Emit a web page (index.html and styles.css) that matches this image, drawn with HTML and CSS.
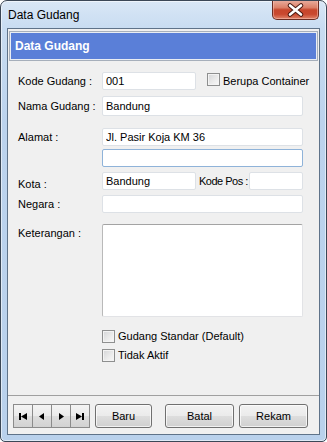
FILE: index.html
```html
<!DOCTYPE html>
<html>
<head>
<meta charset="utf-8">
<link rel="stylesheet" href="styles.css">
</head>
<body>
<div class="window">
  <div class="titlebar">
    <span class="title">Data Gudang</span>
    <div class="close">
      <svg width="47" height="20" viewBox="0 0 47 20">
        <path d="M18 5.5 L29 14.5 M29 5.5 L18 14.5" stroke="#4a1a12" stroke-width="4.6" stroke-linecap="round"/>
        <path d="M18 5.5 L29 14.5 M29 5.5 L18 14.5" stroke="#ffffff" stroke-width="2.6" stroke-linecap="round"/>
      </svg>
    </div>
  </div>
  <div class="client">
    <div class="panel">
      <div class="panel-head">Data Gudang</div>
      <div class="form">
        <div class="row r1">
          <span class="lbl">Kode Gudang :</span>
          <input class="field short" value="001">
          <span class="cb cb-inline"></span><span class="cbtext">Berupa Container</span>
        </div>
        <div class="row r2">
          <span class="lbl">Nama Gudang :</span>
          <input class="field wide tall" value="Bandung">
        </div>
        <div class="row r3">
          <span class="lbl">Alamat :</span>
          <input class="field wide" value="Jl. Pasir Koja KM 36">
        </div>
        <div class="row r4">
          <span class="lbl"></span>
          <input class="field wide focus" value="">
        </div>
        <div class="row r5">
          <span class="lbl low">Kota :</span>
          <input class="field short" value="Bandung">
          <span class="lbl2">Kode Pos :</span>
          <input class="field pos" value="">
        </div>
        <div class="row r6">
          <span class="lbl">Negara :</span>
          <input class="field wide" value="">
        </div>
        <div class="row r7">
          <span class="lbl top">Keterangan :</span>
          <textarea class="memo"></textarea>
        </div>
        <div class="chkrow c1"><span class="cb"></span><span class="cbtext">Gudang Standar (Default)</span></div>
        <div class="chkrow c2"><span class="cb"></span><span class="cbtext">Tidak Aktif</span></div>
      </div>
    </div>
    <div class="sep"></div>
    <div class="footer">
      <div class="nav">
        <div class="nb"><svg width="8" height="7" viewBox="0 0 8 7"><rect x="0" y="0" width="2" height="7" fill="#000"/><polygon points="8,0 2,3.5 8,7" fill="#000"/></svg></div>
        <div class="nb"><svg width="6" height="7" viewBox="0 0 6 7"><polygon points="5,0 0,3.5 5,7" fill="#000"/></svg></div>
        <div class="nb"><svg width="6" height="7" viewBox="0 0 6 7"><polygon points="1,0 6,3.5 1,7" fill="#000"/></svg></div>
        <div class="nb"><svg width="8" height="7" viewBox="0 0 8 7"><polygon points="0,0 6,3.5 0,7" fill="#000"/><rect x="6" y="0" width="2" height="7" fill="#000"/></svg></div>
      </div>
      <button class="btn baru">Baru</button>
      <button class="btn batal">Batal</button>
      <button class="btn rekam">Rekam</button>
    </div>
  </div>
</div>
</body>
</html>
```
FILE: styles.css
```css
html, body {
  margin: 0;
  padding: 0;
  background: #ffffff;
}
* { box-sizing: border-box; }

.window {
  width: 327px;
  height: 442px;
  border: 1px solid #3b4756;
  border-radius: 7px 7px 5px 5px;
  background: linear-gradient(to bottom, #d9e7f6 0px, #c8dcf1 28px, #bcd3ed 120px, #b9d1ec 100%);
  box-shadow: inset 0 0 0 1px rgba(255,255,255,0.55);
  display: flex;
  flex-direction: column;
  font-family: "Liberation Sans", Arial, sans-serif;
  overflow: hidden;
}

.titlebar {
  height: 27px;
  flex: none;
  display: flex;
  align-items: flex-start;
  padding-left: 7px;
}
.title {
  font-size: 12px;
  line-height: 14px;
  padding-top: 7px;
  color: #000;
}
.close {
  margin-left: auto;
  margin-right: 7px;
  margin-top: -1px;
  width: 47px;
  height: 20px;
  border: 1px solid #6b2c22;
  border-top: none;
  border-radius: 0 0 5px 5px;
  background: linear-gradient(to bottom, #eab0a2 0%, #db8068 40%, #c7462c 52%, #c9482f 75%, #e0846a 100%);
  box-shadow: inset 0 0 0 1px rgba(255,210,200,0.45);
  position: relative;
}
.close svg {
  position: absolute;
  left: -1px;
  top: 0;
}

.client {
  margin: 0 6px;
  height: 407px;
  flex: none;
  border: 1px solid #5f7389;
  background: #f0f0f0;
  display: flex;
  flex-direction: column;
}

.panel {
  height: 366px;
  flex: none;
}
.panel-head {
  margin: 3px 2px 0 2px;
  height: 28px;
  border: 1px solid #e9edf3;
  box-shadow: 0 0 0 1px #a6afbb;
  background: #5a7fd8;
  color: #ffffff;
  font-weight: bold;
  font-size: 12px;
  line-height: 26px;
  padding-left: 4px;
}

.form {
  padding: 12px 0 0 10px;
  font-size: 11px;
  line-height: 13px;
  color: #000;
}
.row {
  display: flex;
  align-items: center;
}
.lbl {
  width: 84px;
  flex: none;
}
.lbl.low { margin-top: 3px; margin-bottom: -3px; }
.row.r7 { align-items: flex-start; }
.lbl.top { padding-top: 3px; }

.field {
  height: 18px;
  border: 1px solid #dde1e6;
  border-radius: 2px;
  background: #ffffff;
  font-family: "Liberation Sans", Arial, sans-serif;
  font-size: 11px;
  padding: 0 3px;
  margin: 0;
  color: #000;
  outline: none;
}
.field.short { width: 94px; }
.field.wide { width: 201px; }
.field.tall { height: 20px; }
.field.pos { width: 54px; }
.field.focus { border-color: #8fb3d9; }

.r2 { margin-top: 6px; }
.r3 { margin-top: 12px; }
.r4 { margin-top: 3px; }
.r5 { margin-top: 5px; }
.r6 { margin-top: 5px; }
.r7 { margin-top: 11px; }

.lbl2 {
  margin-left: 3px;
  width: 50px;
  flex: none;
  white-space: nowrap;
  letter-spacing: -0.5px;
}

.memo {
  width: 201px;
  height: 93px;
  margin: 0;
  border: 1px solid #e2e3e6;
  border-top-color: #a3a3a3;
  border-left-color: #b9b9b9;
  border-radius: 2px;
  background: #ffffff;
  resize: none;
  outline: none;
  display: block;
}

.cb {
  width: 13px;
  height: 13px;
  flex: none;
  border: 1px solid #8e8f8f;
  background: linear-gradient(135deg, #d4d5d7 0%, #ececec 60%, #f8f8f8 100%);
  box-shadow: inset 0 0 0 1px #f3f3f3;
  display: inline-block;
}
.cb-inline { margin-left: 11px; margin-top: -3px; }
.cbtext {
  margin-left: 3px;
  white-space: nowrap;
}
.chkrow {
  display: flex;
  align-items: center;
  margin-left: 84px;
  height: 13px;
}
.c1 { margin-top: 13px; }
.c2 { margin-top: 6px; }

.sep {
  height: 1px;
  flex: none;
  background: #a0a0a0;
}

.footer {
  display: flex;
  padding: 8px 0 0 5px;
}
.nav {
  display: flex;
}
.nb {
  width: 20px;
  height: 24px;
  border: 1px solid #8b8b8b;
  background: linear-gradient(to bottom, #f4f4f4 0%, #ebebeb 48%, #dddddd 52%, #d2d2d2 100%);
  display: flex;
  align-items: center;
  justify-content: center;
}
.nb + .nb { margin-left: -1px; }

.btn {
  height: 24px;
  border: 1px solid #707070;
  border-radius: 3px;
  background: linear-gradient(to bottom, #f2f2f2 0%, #ebebeb 48%, #dddddd 52%, #cfcfcf 100%);
  box-shadow: inset 0 0 0 1px rgba(255,255,255,0.7);
  font-family: "Liberation Sans", Arial, sans-serif;
  font-size: 11px;
  color: #000;
  padding: 0;
  margin: 0;
}
.baru { width: 57px; margin-left: 5px; }
.batal { width: 69px; margin-left: 13px; }
.rekam { width: 69px; margin-left: 5px; }
```
